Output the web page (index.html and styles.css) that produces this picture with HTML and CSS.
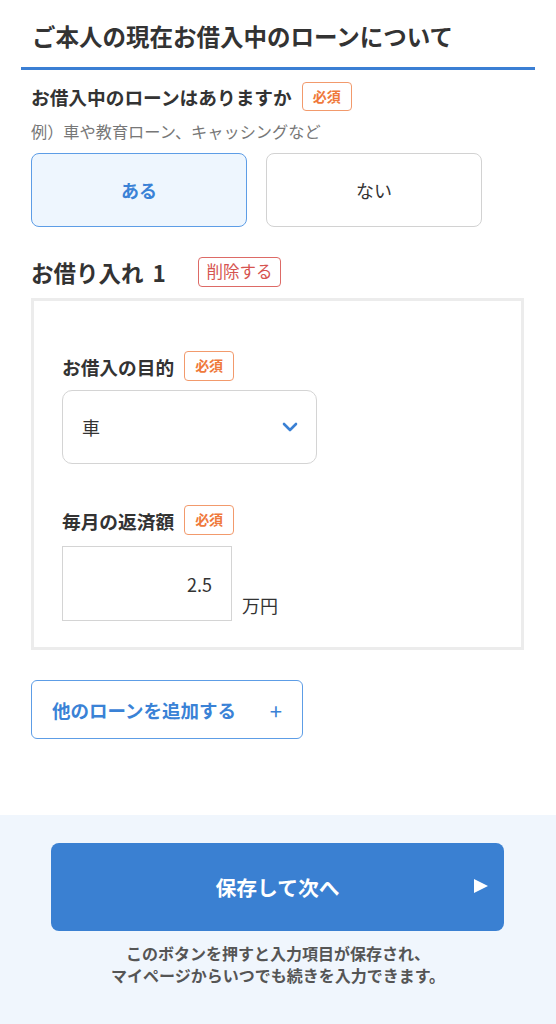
FILE: index.html
```html
<!DOCTYPE html>
<html lang="ja">
<head>
<meta charset="utf-8">
<title>お借入中のローン</title>
<link rel="stylesheet" href="styles.css">
</head>
<body>
<main class="page">
  <h1 class="title">ご本人の現在お借入中のローンについて</h1>
  <div class="rule"></div>

  <section class="question">
    <div class="label-row">
      <span class="label">お借入中のローンはありますか</span>
      <span class="req">必須</span>
    </div>
    <p class="hint">例）車や教育ローン、キャッシングなど</p>
    <div class="choices">
      <button class="choice selected">ある</button>
      <button class="choice">ない</button>
    </div>
  </section>

  <section class="loan">
    <div class="loan-head">
      <h2 class="loan-title">お借り入れ 1</h2>
      <span class="delete">削除する</span>
    </div>
    <div class="loan-box">
      <div class="label-row">
        <span class="label">お借入の目的</span>
        <span class="req">必須</span>
      </div>
      <div class="select">
        <span class="select-value">車</span>
        <svg class="chevron" width="16" height="10" viewBox="0 0 16 10"><polyline points="2,2 8,8 14,2" fill="none" stroke="#3a80d4" stroke-width="2.6" stroke-linecap="round" stroke-linejoin="round"/></svg>
      </div>

      <div class="label-row second">
        <span class="label">毎月の返済額</span>
        <span class="req">必須</span>
      </div>
      <div class="amount-row">
        <div class="amount">2.5</div>
        <span class="unit">万円</span>
      </div>
    </div>
  </section>

  <button class="add"><span>他のローンを追加する</span><span class="plus">+</span></button>
</main>

<footer class="footer">
  <button class="save">保存して次へ<span class="arrow"></span></button>
  <p class="note">このボタンを押すと入力項目が保存され、<br>マイページからいつでも続きを入力できます。</p>
</footer>
</body>
</html>
```

FILE: styles.css
```css
* { box-sizing: border-box; }

html, body {
  margin: 0;
  padding: 0;
  background: #ffffff;
}

body {
  font-family: "Noto Sans CJK JP", "Noto Sans", sans-serif;
  color: #333333;
  width: 556px;
}

.page {
  padding: 19px 21px 76px;
}

.title {
  margin: 0;
  padding-left: 11px;
  font-size: 23.5px;
  line-height: 34px;
  font-weight: 700;
  color: #333333;
}

.rule {
  margin-top: 14px;
  height: 3px;
  background: #3b7fd4;
}

.question,
.loan {
  padding-left: 10px;
  padding-right: 11px;
}

.label-row {
  display: flex;
  align-items: center;
  height: 29px;
}

.question .label-row {
  margin-top: 12px;
}

.label {
  font-size: 18.7px;
  font-weight: 700;
  line-height: 29px;
  color: #333333;
}

.req {
  margin-left: 10px;
  height: 29px;
  padding: 0 10px;
  border: 1.5px solid #f29a6c;
  border-radius: 4px;
  color: #ef793b;
  font-size: 14px;
  font-weight: 700;
  line-height: 26px;
}

.hint {
  margin: 8px 0 0;
  font-size: 16.2px;
  line-height: 24px;
  color: #777777;
}

.choices {
  margin-top: 10px;
  display: grid;
  grid-template-columns: 216px 216px;
  gap: 19px;
}

.choice {
  height: 74px;
  border: 1.5px solid #d2d2d2;
  border-radius: 8px;
  background: #ffffff;
  font-family: inherit;
  font-size: 18px;
  color: #333333;
  padding: 0;
}

.choice.selected {
  border-color: #5d9de6;
  background: #eef6fe;
  color: #3a82d6;
  font-weight: 700;
}

.loan-head {
  margin-top: 30px;
  display: flex;
  align-items: center;
  height: 30px;
}

.loan-title {
  margin: 0;
  font-size: 22.5px;
  font-weight: 700;
  line-height: 30px;
  word-spacing: 4px;
  color: #333333;
}

.delete {
  margin-left: 32px;
  height: 30px;
  padding: 0 7.5px;
  border: 1.5px solid #dd6a66;
  border-radius: 4px;
  color: #d65450;
  font-size: 16.5px;
  line-height: 27px;
}

.loan-box {
  margin-top: 11px;
  border: 3px solid #ececec;
  padding: 50px 28px 26px;
}

.loan-box .label-row {
  height: 30px;
}

.loan-box .req {
  height: 30px;
  line-height: 27px;
}

.select {
  margin-top: 9px;
  width: 255px;
  height: 74px;
  border: 1.5px solid #d4d4d4;
  border-radius: 10px;
  display: flex;
  align-items: center;
  justify-content: space-between;
  padding: 0 18px 0 19px;
}

.select-value {
  font-size: 18px;
  color: #333333;
}

.chevron {
  display: block;
}

.label-row.second {
  margin-top: 41px;
}

.amount-row {
  margin-top: 11px;
  display: flex;
  align-items: flex-end;
}

.amount {
  width: 170px;
  height: 75px;
  border: 1.5px solid #d4d4d4;
  display: flex;
  align-items: center;
  justify-content: flex-end;
  padding-right: 19px;
  font-size: 18px;
  color: #333333;
}

.unit {
  margin-left: 10px;
  margin-bottom: 4px;
  font-size: 18px;
  line-height: 24px;
  color: #333333;
}

.add {
  margin-top: 30px;
  margin-left: 10px;
  width: 272px;
  height: 59px;
  border: 1.5px solid #5d9de6;
  border-radius: 6px;
  background: #ffffff;
  display: flex;
  align-items: center;
  justify-content: space-between;
  padding: 0 20px 0 20px;
  font-family: inherit;
  font-size: 18.5px;
  font-weight: 700;
  color: #3a82d6;
}

.plus {
  font-weight: 400;
  font-size: 22px;
  line-height: 1;
}

.footer {
  background: #f0f6fd;
  padding: 28px 51px 38px;
  height: 209px;
}

.save {
  position: relative;
  width: 453px;
  height: 88px;
  border: none;
  border-radius: 8px;
  background: #3a80d2;
  color: #ffffff;
  font-family: inherit;
  font-size: 20.8px;
  font-weight: 700;
  padding: 0;
}

.arrow {
  position: absolute;
  right: 16px;
  top: 36px;
  width: 0;
  height: 0;
  border-top: 7.5px solid transparent;
  border-bottom: 7.5px solid transparent;
  border-left: 14px solid #ffffff;
}

.note {
  margin: 11px 0 0;
  text-align: center;
  font-size: 16px;
  line-height: 22px;
  font-weight: 700;
  color: #555555;
}
```
